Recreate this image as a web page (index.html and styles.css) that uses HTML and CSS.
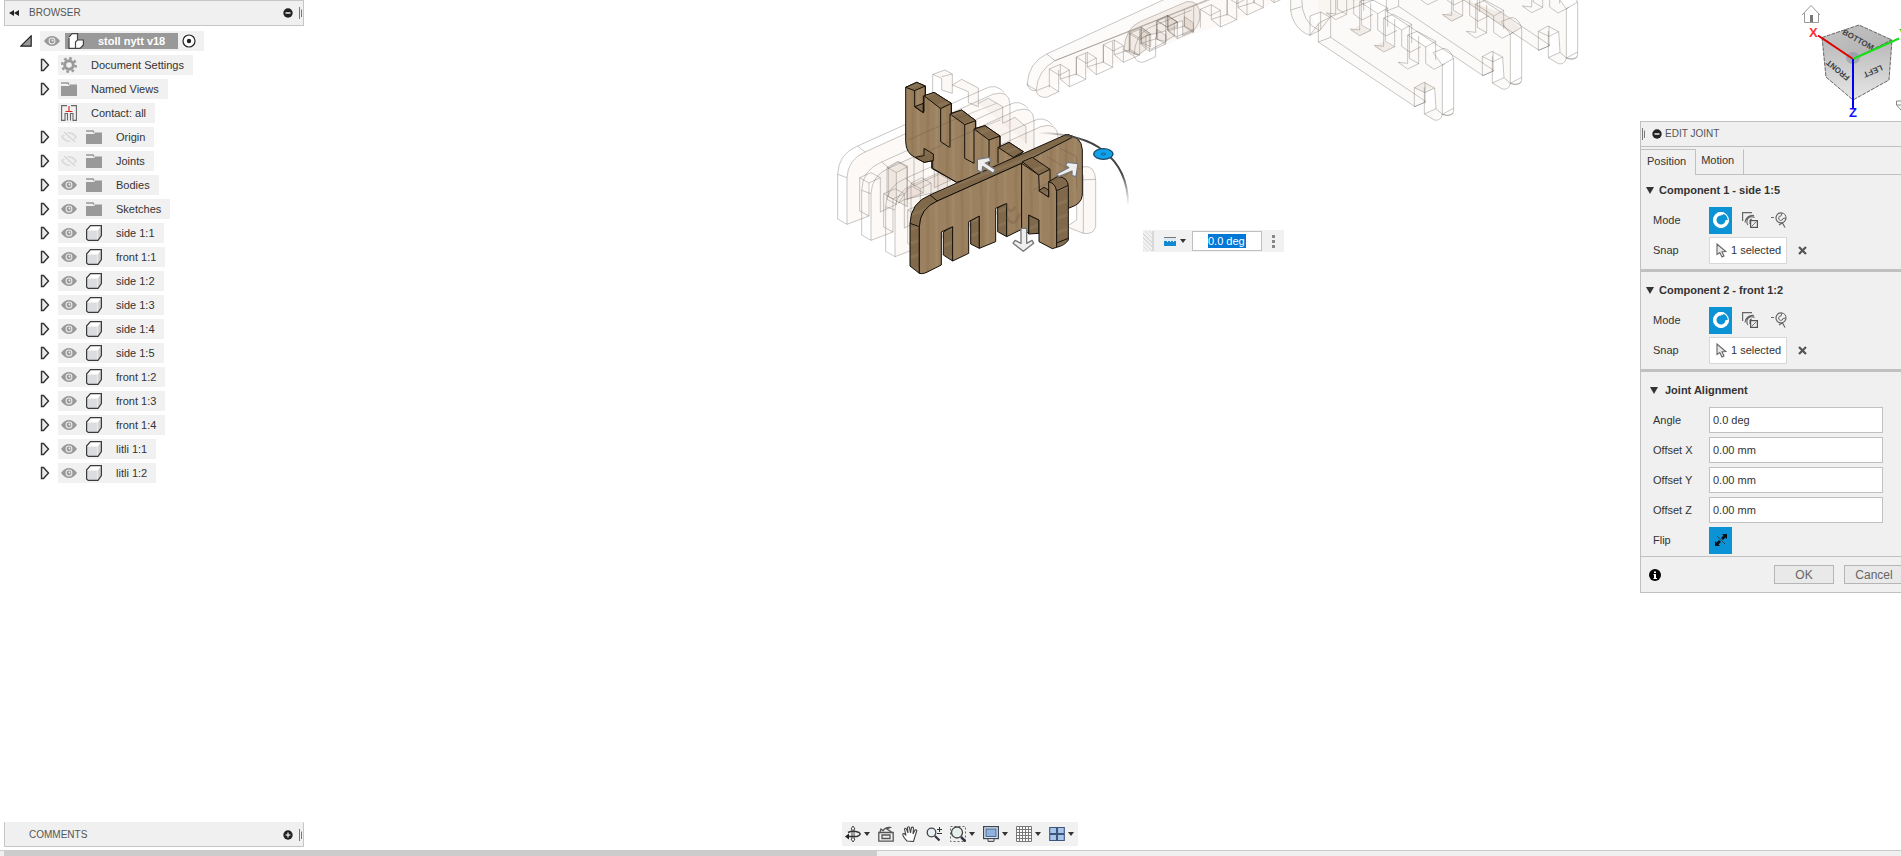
FILE: index.html
```html
<!DOCTYPE html>
<html lang="en">
<head>
<meta charset="utf-8">
<title>stoll nytt v18</title>
<link rel="stylesheet" href="styles.css">
</head>
<body>
<svg class="defs" width="0" height="0" aria-hidden="true">
  <symbol id="tri" viewBox="0 0 10 14"><path d="M1.500 1.500H3.500L8.500 7L3.500 12.500H1.500Z" fill="#e9e9e9" stroke="#333" stroke-width="1.400"/></symbol>
  <symbol id="eye" viewBox="0 0 16 12"><path d="M0 6Q3.500 1 8 1T16 6Q12.500 11 8 11T0 6Z" fill="#999"/><circle cx="8" cy="6" r="3.400" fill="#eee"/><circle cx="8" cy="6" r="2.400" fill="#999"/><circle cx="8.500" cy="5.500" r="1" fill="#eee"/></symbol>
  <symbol id="eyeoff" viewBox="0 0 16 12"><path d="M1 6Q4 2 8 2T15 6Q12 10 8 10T1 6Z" fill="none" stroke="#dcdcdc" stroke-width="2"/><path d="M2 0L14 12" stroke="#f2f2f2" stroke-width="4"/><path d="M3 1L14 11" stroke="#d6d6d6" stroke-width="1.500"/></symbol>
  <symbol id="folder" viewBox="0 0 16 14"><path d="M0 4H8L9 2.500H16V14H0Z" fill="#999"/><path d="M0 1H7L8 2.500" fill="none" stroke="#999" stroke-width="1.500"/></symbol>
  <symbol id="cube" viewBox="0 0 16 16"><path d="M.5 5L4.500 .5H15.500V10.500L12 15.500H2L.5 14Z" fill="#fff"/><path d="M1 5.500H11.500V15H2L1 14Z" fill="#dcdde0"/><path d="M12 5L15 1V10.500L12 15Z" fill="#d2d2d2"/><path d="M.6 5L4.500 .6H15.400V10.500L12 15.400H2.200L.6 14Z" fill="none" stroke="#3a3a3a" stroke-width="1.200"/></symbol>
  <symbol id="gear" viewBox="0 0 16 16"><circle cx="8" cy="8" r="4.300" fill="none" stroke="#999" stroke-width="3"/><circle cx="8" cy="8" r="6.800" fill="none" stroke="#999" stroke-width="2.400" stroke-dasharray="2.670 2.670"/></symbol>
  <symbol id="contact" viewBox="0 0 16 16"><path d="M6 .6H.6V15.400H4V8.500H6.500V15.400M10 .6H15.400V15.400H12V8.500H9.500V15.400" fill="none" stroke="#666" stroke-width="1.100"/><path d="M8 1V6.500M4.500 6.500H11.500" stroke="#d22" stroke-width="1.100"/></symbol>
  <symbol id="minus" viewBox="0 0 10 10"><circle cx="5" cy="5" r="4.700" fill="#222"/><path d="M2.500 5H7.500" stroke="#fff" stroke-width="1.400"/></symbol>
  <symbol id="plus" viewBox="0 0 10 10"><circle cx="5" cy="5" r="4.700" fill="#222"/><path d="M2.500 5H7.500M5 2.500V7.500" stroke="#fff" stroke-width="1.200"/></symbol>
  <symbol id="grip" viewBox="0 0 4 12"><path d="M.5 0V12M2.500 2.500V10" stroke="#777" stroke-width="1"/></symbol>
  <symbol id="caret" viewBox="0 0 6 4"><path d="M0 0H6L3 4Z" fill="#333"/></symbol>
  <symbol id="down" viewBox="0 0 8 7"><path d="M0 0H8L4 7Z" fill="#333"/></symbol>
  <symbol id="simple" viewBox="0 0 16 16"><circle cx="8" cy="8" r="6.200" fill="none" stroke="#fff" stroke-width="3.400" stroke-dasharray="31 8" stroke-dashoffset="0"/><circle cx="8" cy="8" r="7.400" fill="none" stroke="#fff" stroke-width="1.100"/><path d="M8.500 2.500L8 5.500A2.500 2.500 0 1 0 10.500 8.500L13.500 8A5 5 0 0 0 8.500 2.500Z" fill="#0b93d6"/></symbol>
  <symbol id="between" viewBox="0 0 16 16"><path d="M.6 9V.6H10M3 10.500A7.500 7.500 0 0 1 12 3.500M6 13A6 6 0 0 1 5 8A5 5 0 0 1 12.500 5.500M8 12V8.500Q8 7 10 7" fill="none" stroke="#666" stroke-width="1.200"/><rect x="8.600" y="8.600" width="6.800" height="6.800" fill="#eee" stroke="#555" stroke-width="1.200"/><path d="M9.500 14.500L14.500 9.500" stroke="#777"/></symbol>
  <symbol id="two" viewBox="0 0 16 16"><path d="M0 5.500H3M8 13L12 10.500M11.500 11L14 15.500" stroke="#666" stroke-width="1.200"/><path d="M11 1A5 5 0 1 0 15 6" fill="none" stroke="#666" stroke-width="1.200"/><path d="M11 1L10 4A2.200 2.200 0 1 0 12 6.500L15 6A5 5 0 0 0 11 1Z" fill="none" stroke="#666"/></symbol>
  <symbol id="cursor" viewBox="0 0 11 15"><path d="M1 1V11.500L3.800 9.500L6 14L8 13L6 8.800L9.800 8.500Z" fill="#e8e8e8" stroke="#666" stroke-width="1.100"/></symbol>
</svg>

<main class="stage">
  <svg class="scene" role="img" aria-label="Joint preview model">
    <defs>
      <pattern id="wood" width="104" height="400" patternUnits="userSpaceOnUse"><rect width="104" height="400" fill="#9b8160"/><path d="M10 0Q14 200 8 400M69 0Q74 180 67 400" stroke="#957a58" stroke-width="9" fill="none"/><path d="M36 0Q40 200 35 400M88 0Q85 200 90 400" stroke="#a18866" stroke-width="8" fill="none"/></pattern>
      <pattern id="dark" width="60" height="40" patternUnits="userSpaceOnUse" patternTransform="rotate(-20)"><rect width="60" height="40" fill="#80694b"/><path d="M0 10H60" stroke="#8a7254" stroke-width="9"/></pattern>
      <linearGradient id="arc" x1="0" y1="0" x2="1" y2="1"><stop offset="0" stop-color="#555" stop-opacity="0"/><stop offset=".3" stop-color="#444"/><stop offset=".75" stop-color="#444"/><stop offset="1" stop-color="#555" stop-opacity="0"/></linearGradient>
      <g id="frontwire">
        <path d="M298 640V500Q300 445 352 423L735 250Q785 235 787 280V405Q785 430 750 443L722 455V370L689 385V472L640 494V408L608 422V508L560 530V430L527 445V545L478 565V468L446 485V580L398 603V500L364 516V615Z" fill="#c69b7a" fill-opacity=".06"/>
        <path d="M298 640L270 624V490Q272 428 330 405L710 234Q745 215 770 245M298 500L270 490M352 423L330 405M364 516L336 500V600L364 615M398 500L370 485L336 500M446 485L418 469V565L446 580M478 468L450 452L418 469M527 445L499 430V530L527 545M560 430L532 415L499 430M608 422L580 407V492L608 508M689 385L661 370V456"/>
      </g>
      <path id="tooth" d="M148 207L181 193L208 210L178 226ZM181 193V237L208 260L257 238L229 222L181 237M208 210V260M257 160V238M229 172V222M148 207V262"/>
      <g id="sidewire">
        <path d="M115 126L405 320L438 305V262L464 265L468 326L433 342L463 360L487 343L487 195L433 135L115 -70Z" fill="#c69b7a" fill-opacity=".055" stroke="none"/>
        <path d="M115 126L405 320L438 305L152 112ZM115 126V70M152 112V-70M403 263L432 247L464 264L435 278ZM403 263V320M435 247V307L403 320M464 264L468 326L433 342V262M468 326L487 343Q482 364 463 360L433 342M487 195V343Q500 350 520 340M487 343L521 325V180Q515 150 492 145L459 158L487 195L521 175M521 325Q523 345 505 347L487 343"/>
        <path id="sidebox" d="M383 105L412 94L467 124L437 141ZM383 105V190L355 187L383 207L416 191L388 175M388 78V175M416 108V191M437 141V190L462 208L495 191M467 124V180"/>
        <use href="#sidebox" x="-72" y="-51"/><use href="#sidebox" x="-144" y="-100"/><use href="#sidebox" x="-216" y="-148"/>
      </g>
    </defs>

    <svg x="1000" y="0" width="320" height="130" viewBox="0 0 960 390" overflow="visible"><g class="ghost">
      <path d="M82 250Q86 188 140 162L500 -5H640L165 182Q112 212 109 270L82 255ZM140 162L165 182" fill="#c69b7a" fill-opacity=".04"/>
      <path d="M109 270Q112 212 165 182L620 0H840L740 45L148 262L176 275L140 293Q112 292 109 270Z" fill="#c69b7a" fill-opacity=".06" stroke="none"/>
      <path d="M165 182L620 0M82 250Q86 274 109 272M109 272L148 257L176 275L140 292Q112 294 109 272M176 210V275"/>
      <use href="#tooth"/><use href="#tooth" x="81" y="-36"/><use href="#tooth" x="162" y="-73"/><use href="#tooth" x="240" y="-106"/><use href="#tooth" x="324" y="-144"/><use href="#tooth" x="453" y="-179"/><use href="#tooth" x="533" y="-215"/><use href="#tooth" x="614" y="-252"/>
      <path d="M372 150Q375 85 420 65L560 5Q598 0 600 45Q600 72 580 92L548 106V62L523 70V108L498 122V92L470 100L438 106V148L414 165Z" fill="#b58a67" fill-opacity=".13"/>
      <path d="M402 166Q404 105 450 82L575 30M372 150L402 168Q410 190 432 186L467 170V110M388 97L424 82L452 102L420 115ZM470 62L502 46L532 66L500 80ZM388 97V152L414 166M424 82V130L452 148L498 125M470 62V110M502 46V90L530 110L580 88"/>
      <path d="M424 82L452 102V140L424 128ZM502 46L532 66V80L502 90ZM470 88L498 106V125L470 118ZM553 50L580 68V98L553 80Z" fill="#93755c" fill-opacity=".13"/>
    </g></svg>

    <svg x="1280" y="0" width="320" height="130" viewBox="0 0 960 390" overflow="visible"><g class="ghost">
      <path d="M32 -5V30C35 62 55 95 90 106L120 91L152 50L280 0ZM65 -5Q65 70 118 91M32 30L65 20M90 106V48L122 36L150 52L118 68ZM122 36V88" fill="#c69b7a" fill-opacity=".055"/>
      <use href="#sidewire"/><use href="#sidewire" x="204" y="-93"/><use href="#sidewire" x="372" y="-169"/>
      <path d="M555 0L665 38L720 82L700 102L665 78ZM210 92L240 76L272 94L240 108ZM282 140L310 124L344 142L310 156ZM485 48L515 33L548 50L516 65ZM403 263L435 247L464 264L435 278Z" fill="#93755c" fill-opacity=".1" stroke="none"/>
    </g></svg>

    <svg x="820" y="60" width="320" height="230" viewBox="0 0 960 690" overflow="visible">
      <g class="ghost">
        <use href="#frontwire" x="-217" y="-147"/><use href="#frontwire" x="-145" y="-99"/><use href="#frontwire" x="-73" y="-50"/>
        <path d="M338 43L375 30L397 42V100L365 90V55L338 43V120M397 75L425 58L475 84V140L445 128V95L397 75M475 130L505 115L548 140V190M548 190L585 172L618 200V250M365 50L397 42M740 500L770 480V360L790 320Q825 315 827 360V500Q820 525 790 520L740 500M790 345V520M770 360L827 358" fill="#c69b7a" fill-opacity=".07"/>
        <path d="M205 325L235 305L262 318V440L205 410ZM235 430L265 385L385 330L415 350V380L250 420Z" fill="#93755c" fill-opacity=".1"/>
      </g>
      <g class="solid">
        <path d="M257 82L290 67L316 78V110L342 97L394 130V160L425 150L467 182V205L495 197L540 228V262L567 247L610 275L560 320L410 367L338 325V302L312 307L285 292Q258 280 257 245Z" fill="url(#wood)"/>
        <path d="M257 82L290 67L316 78L284 92ZM312 107L342 97L394 130L362 146ZM390 162L425 150L467 182L434 194ZM462 207L495 197L540 228L507 240ZM534 262L567 247L610 275L580 292ZM284 140L310 130V158ZM312 265L340 282V302L312 307L285 292L312 287Z" fill="url(#dark)"/>
        <path d="M284 92V140L310 158V107M316 78V105M312 107V155M362 146V245L388 262M394 130V160M390 162V262M434 194V295L462 310M467 182V205M462 207V310M507 240V320M540 228V262M534 262V310M580 292V300M335 302V325L410 367"/>
        <path d="M605 308L735 225Q785 225 787 270V405Q785 432 750 443L605 500Z" fill="url(#wood)"/>
        <path d="M270 490Q272 428 330 405L735 225Q752 220 755 233L605 310L352 423Q300 445 298 500V640L270 618Z" fill="url(#dark)"/>
        <path d="M370 516L398 500V603L370 585ZM452 482L478 468V565L452 552ZM533 443L560 430V530L533 515Z" fill="url(#dark)"/>
        <path d="M298 640V500Q300 445 352 423L605 310V508L560 530V430L527 445V545L478 565V468L446 485V580L398 603V500L364 516V615L318 638Q305 643 298 640Z" fill="url(#wood)"/>
        <path d="M298 500L270 490M352 423L330 405"/>
        <path d="M626 465L657 480V520L626 522Z" fill="url(#dark)"/>
        <path d="M605 310L656 345L658 392L686 411L686 365Q710 370 710 395V562L697 566L657 545V480L626 465V520L605 505Z" fill="url(#wood)"/>
        <path d="M607 305L637 292L690 328L656 345ZM656 392L672 382L686 390V411ZM686 365L712 350Q745 350 745 382V540Q735 556 710 562V395Q707 370 686 365Z" fill="url(#dark)"/>
        <path d="M690 328V362M710 392L745 376M712 548L745 535"/>
      </g>
      <path d="M557 430Q570 470 585 440M560 470Q580 510 600 460" fill="none" stroke="#6f583c" stroke-opacity=".3" stroke-width="8"/>
      <path d="M720 265L770 290V385M680 290L750 330M640 390L780 325M265 240L400 180L530 130M290 290L430 225L540 180" stroke="#4b3c2b" stroke-opacity=".35" stroke-width="2" fill="none"/>
      <path d="M655 218Q790 222 850 272Q925 330 924 435" fill="none" stroke="url(#arc)" stroke-width="6"/>
      <ellipse cx="850" cy="282" rx="29" ry="16" fill="#12a2ec" stroke="#174765" stroke-width="4"/><ellipse cx="850" cy="282" rx="7" ry="3" fill="none" stroke="#174765" stroke-width="2"/>
      <g class="arrows">
        <path d="M520 340L488 320L486 338L472 330V298L508 292L512 303L496 309L526 329Z"/>
        <path d="M710 342L746 323L736 316L742 307L774 311L768 350L756 347L756 333L716 350Z"/>
        <path d="M603 505H620V550L636 541L641 550L610 574L579 550L585 541L603 550Z"/>
      </g>
    </svg>
  </svg>

  <div class="chrome">
    <div class="left">
      <section class="browser">
        <header class="bar"><svg class="rew" viewBox="0 0 10 6"><path d="M5 0V6L0 3ZM10 0V6L5 3Z" fill="#222"/></svg><h2>BROWSER</h2><button class="dot" aria-label="Collapse browser"><svg><use href="#minus"/></svg></button><svg class="grip"><use href="#grip"/></svg></header>
        <ul class="tree">
          <li class="root"><svg class="open" viewBox="0 0 12 12"><path d="M.8 11.200L11.200 .8V11.200Z" fill="#999" stroke="#222" stroke-width="1.200"/></svg><span class="chip"><svg class="eye"><use href="#eye"/></svg><b class="name"><svg class="asm" viewBox="0 0 16 16"><path d="M1 3L3.500 .6H9V7H15V11.500L12 15.400H1Z" fill="#fff"/><path d="M1 5V15.400H7.500M1 4L4 .6H9.500V7M7.500 15.400V9L9.500 7H15.400V12L12 15.400H7.500" fill="none" stroke="#444" stroke-width="1.200"/></svg>stoll nytt v18</b><svg class="radio" viewBox="0 0 14 14"><circle cx="7" cy="7" r="6" fill="#fff" stroke="#222" stroke-width="1.200"/><circle cx="7" cy="7" r="2.200" fill="#222"/></svg></span></li>
          <li><svg class="tri"><use href="#tri"/></svg><span class="chip"><svg class="ic"><use href="#gear"/></svg>Document Settings</span></li>
          <li><svg class="tri"><use href="#tri"/></svg><span class="chip"><svg class="ic"><use href="#folder"/></svg>Named Views</span></li>
          <li><i class="tri"></i><span class="chip"><svg class="ic"><use href="#contact"/></svg>Contact: all</span></li>
          <li><svg class="tri"><use href="#tri"/></svg><span class="chip"><svg class="eye"><use href="#eyeoff"/></svg><svg class="ic"><use href="#folder"/></svg>Origin</span></li>
          <li><svg class="tri"><use href="#tri"/></svg><span class="chip"><svg class="eye"><use href="#eyeoff"/></svg><svg class="ic"><use href="#folder"/></svg>Joints</span></li>
          <li><svg class="tri"><use href="#tri"/></svg><span class="chip"><svg class="eye"><use href="#eye"/></svg><svg class="ic"><use href="#folder"/></svg>Bodies</span></li>
          <li><svg class="tri"><use href="#tri"/></svg><span class="chip"><svg class="eye"><use href="#eye"/></svg><svg class="ic"><use href="#folder"/></svg>Sketches</span></li>
          <li><svg class="tri"><use href="#tri"/></svg><span class="chip"><svg class="eye"><use href="#eye"/></svg><svg class="ic"><use href="#cube"/></svg>side 1:1</span></li>
          <li><svg class="tri"><use href="#tri"/></svg><span class="chip"><svg class="eye"><use href="#eye"/></svg><svg class="ic"><use href="#cube"/></svg>front 1:1</span></li>
          <li><svg class="tri"><use href="#tri"/></svg><span class="chip"><svg class="eye"><use href="#eye"/></svg><svg class="ic"><use href="#cube"/></svg>side 1:2</span></li>
          <li><svg class="tri"><use href="#tri"/></svg><span class="chip"><svg class="eye"><use href="#eye"/></svg><svg class="ic"><use href="#cube"/></svg>side 1:3</span></li>
          <li><svg class="tri"><use href="#tri"/></svg><span class="chip"><svg class="eye"><use href="#eye"/></svg><svg class="ic"><use href="#cube"/></svg>side 1:4</span></li>
          <li><svg class="tri"><use href="#tri"/></svg><span class="chip"><svg class="eye"><use href="#eye"/></svg><svg class="ic"><use href="#cube"/></svg>side 1:5</span></li>
          <li><svg class="tri"><use href="#tri"/></svg><span class="chip"><svg class="eye"><use href="#eye"/></svg><svg class="ic"><use href="#cube"/></svg>front 1:2</span></li>
          <li><svg class="tri"><use href="#tri"/></svg><span class="chip"><svg class="eye"><use href="#eye"/></svg><svg class="ic"><use href="#cube"/></svg>front 1:3</span></li>
          <li><svg class="tri"><use href="#tri"/></svg><span class="chip"><svg class="eye"><use href="#eye"/></svg><svg class="ic"><use href="#cube"/></svg>front 1:4</span></li>
          <li><svg class="tri"><use href="#tri"/></svg><span class="chip"><svg class="eye"><use href="#eye"/></svg><svg class="ic"><use href="#cube"/></svg>litli 1:1</span></li>
          <li><svg class="tri"><use href="#tri"/></svg><span class="chip"><svg class="eye"><use href="#eye"/></svg><svg class="ic"><use href="#cube"/></svg>litli 1:2</span></li>
        </ul>
      </section>
      <section class="bar comments"><h2>COMMENTS</h2><button class="dot" aria-label="Add comment"><svg><use href="#plus"/></svg></button><svg class="grip"><use href="#grip"/></svg></section>
    </div>

    <nav class="tools" aria-label="Navigation">
      <button class="drop" aria-label="Orbit"><svg class="tool" viewBox="0 0 16 16"><path d="M8 0L10 3H9V13H10L8 16L6 13H7V3H6Z" fill="#fff" stroke="#444"/><path d="M3 6.500Q8 4 14 6.500Q17 8.500 12 10.500H3" fill="none" stroke="#333" stroke-width="1.500"/><path d="M4 7.500V13.500L0 10.500Z" fill="#222"/></svg><svg class="caret"><use href="#caret"/></svg></button>
      <button aria-label="Look at"><svg class="tool" viewBox="0 0 16 16"><path d="M.8 6.500H15.200V15.200H.8ZM4 9H12V12.500H4ZM2 6L3 3L5 4.500Q8 .8 12 1.500L9 3L13.500 6" fill="none" stroke="#555" stroke-width="1.300"/></svg></button>
      <button aria-label="Pan"><svg class="tool" viewBox="0 0 16 16"><path d="M5 15Q1 11 .7 8Q2 6.500 4 9.500L2.500 3Q3.500 1.500 4.500 3L6 7L5.500 1.500Q6.500 0 7.500 1.500L8.500 7L9.500 1.500Q10.500 .5 11.500 2L11 8L13 4Q15 3.500 14.700 5L12.500 12L11.500 15.500Z" fill="#fff" stroke="#444" stroke-width="1.100"/></svg></button>
      <button aria-label="Zoom"><svg class="tool" viewBox="0 0 16 16"><circle cx="5.500" cy="6.500" r="4.300" fill="#e8eef3" stroke="#444" stroke-width="1.300"/><path d="M9 10L13.500 14.500" stroke="#334" stroke-width="2.200"/><path d="M11 3.500H16M13.500 1V6M11 7.500H16" stroke="#333"/></svg></button>
      <button class="drop" aria-label="Zoom window"><svg class="tool" viewBox="0 0 16 16"><path d="M.5 .5H15.500V15.500H.5Z" fill="none" stroke="#666" stroke-dasharray="2 2"/><circle cx="7" cy="6.500" r="5.500" fill="#e5efed" stroke="#444" stroke-width="1.300"/><path d="M11 11L15.500 15.500" stroke="#334" stroke-width="2.500"/></svg><svg class="caret"><use href="#caret"/></svg></button>
      <button class="drop" aria-label="Display settings"><svg class="tool" viewBox="0 0 16 16"><rect x=".6" y=".6" width="14.800" height="12" fill="#dfe6ee" stroke="#3c4654" stroke-width="1.200"/><rect x="3" y="3" width="10" height="7.500" fill="#8fb2de" stroke="#4a6694"/><path d="M5 13V15.400H11V13" fill="#ddd" stroke="#3c4654"/></svg><svg class="caret"><use href="#caret"/></svg></button>
      <button class="drop" aria-label="Grid and snaps"><svg class="tool" viewBox="0 0 16 16"><path d="M.5 .5H15.500V15.500H.5ZM3.500 0V16M6.500 0V16M9.500 0V16M12.500 0V16M0 3.500H16M0 6.500H16M0 9.500H16M0 12.500H16" fill="#fff" stroke="#777"/></svg><svg class="caret"><use href="#caret"/></svg></button>
      <button class="drop" aria-label="Viewports"><svg class="tool" viewBox="0 0 16 16"><path d="M.7 1.500H7.500V7.500H.7ZM8.500 1.500H15.300V7.500H8.500ZM.7 8.500H7.500V14.500H.7ZM8.500 8.500H15.300V14.500H8.500Z" fill="#a9c6ea" stroke="#3d567d" stroke-width="1.100"/></svg><svg class="caret"><use href="#caret"/></svg></button>
    </nav>

    <div class="right">
      <svg class="viewcube" viewBox="0 0 101 121" role="img" aria-label="View cube">
        <defs><linearGradient id="f1" x1="0" y1="0" x2="1" y2="1"><stop offset="0" stop-color="#c4c4c4"/><stop offset="1" stop-color="#b0b0b0"/></linearGradient><linearGradient id="f2" x1="0" y1="0" x2="0" y2="1"><stop offset="0" stop-color="#b8b8b8"/><stop offset="1" stop-color="#e6e6e6"/></linearGradient></defs>
        <path d="M2 15L11 5.500L20 15M4.500 13V22.500H18.500V13" fill="#fff" stroke="#999"/><rect x="10" y="15" width="3" height="7" fill="#777"/>
        <g stroke="#666" stroke-dasharray="4 1"><path d="M22 37.500L59 25L92 40L53 59Z" fill="url(#f1)"/><path d="M22 37.500L53 59V100L26 77Z" fill="url(#f2)"/><path d="M53 59L92 40L89 80L53 100Z" fill="url(#f2)"/></g>
        <ellipse cx="53" cy="58" rx="7" ry="6" fill="#8d93a5" opacity=".6"/>
        <g class="face"><text transform="translate(58 40) rotate(29)">BOTTOM</text><text transform="translate(73 71) rotate(156)">LEFT</text><text transform="translate(38 70) rotate(219)">FRONT</text></g>
        <path d="M18 35.500L53 59" stroke="#e00000" stroke-width="2"/><path d="M53 59L99 38.500" stroke="#16e016" stroke-width="2"/><path d="M53 59V108" stroke="#0000f0" stroke-width="2"/>
        <g class="axis"><text x="9" y="37" fill="#f33">X</text><text x="99" y="38" fill="#2c2">Y</text><text x="49" y="117" fill="#11f">Z</text></g>
        <path d="M101 101H96.500V105L101 110M97 105H101" fill="none" stroke="#888"/>
      </svg>
      <form class="dialog">
        <header class="bar2"><svg class="grip"><use href="#grip"/></svg><button type="button" class="dot" aria-label="Collapse"><svg><use href="#minus"/></svg></button><h2>EDIT JOINT</h2></header>
        <div class="tabs"><button type="button" class="tab on">Position</button><button type="button" class="tab">Motion</button></div>
        <fieldset>
          <h3><svg class="down"><use href="#down"/></svg>Component 1 - side 1:5</h3>
          <div class="row"><span class="lab">Mode</span><button type="button" class="mode on" aria-label="Simple"><svg><use href="#simple"/></svg></button><button type="button" class="mode" aria-label="Between two faces"><svg><use href="#between"/></svg></button><button type="button" class="mode" aria-label="Two edge intersection"><svg><use href="#two"/></svg></button></div>
          <div class="row"><span class="lab">Snap</span><button type="button" class="snap"><svg><use href="#cursor"/></svg>1 selected</button><button type="button" class="x" aria-label="Clear selection"><svg viewBox="0 0 9 9"><path d="M1 1L8 8M8 1L1 8" stroke="#555" stroke-width="2.200"/></svg></button></div>
        </fieldset>
        <fieldset>
          <h3><svg class="down"><use href="#down"/></svg>Component 2 - front 1:2</h3>
          <div class="row"><span class="lab">Mode</span><button type="button" class="mode on" aria-label="Simple"><svg><use href="#simple"/></svg></button><button type="button" class="mode" aria-label="Between two faces"><svg><use href="#between"/></svg></button><button type="button" class="mode" aria-label="Two edge intersection"><svg><use href="#two"/></svg></button></div>
          <div class="row"><span class="lab">Snap</span><button type="button" class="snap"><svg><use href="#cursor"/></svg>1 selected</button><button type="button" class="x" aria-label="Clear selection"><svg viewBox="0 0 9 9"><path d="M1 1L8 8M8 1L1 8" stroke="#555" stroke-width="2.200"/></svg></button></div>
        </fieldset>
        <fieldset>
          <h3 class="indent"><svg class="down"><use href="#down"/></svg>Joint Alignment</h3>
          <div class="row"><label class="lab" for="ang">Angle</label><input id="ang" value="0.0 deg"></div>
          <div class="row"><label class="lab" for="ox">Offset X</label><input id="ox" value="0.00 mm"></div>
          <div class="row"><label class="lab" for="oy">Offset Y</label><input id="oy" value="0.00 mm"></div>
          <div class="row"><label class="lab" for="oz">Offset Z</label><input id="oz" value="0.00 mm"></div>
          <div class="row"><span class="lab">Flip</span><button type="button" class="mode on" aria-label="Flip"><svg viewBox="0 0 16 16"><path d="M2 9V14H7L5.500 12.500L8 10L6 8L3.500 10.500ZM14 2V7L12.500 5.500L10 8L8 6L10.500 3.500L9 2Z" fill="#081018"/><path d="M4 4L12 12" stroke="#26415a"/></svg></button></div>
        </fieldset>
        <footer><svg class="info" viewBox="0 0 12 12"><circle cx="6" cy="6" r="6" fill="#000"/><path d="M5 2.500H7V4H5ZM4.500 5H7V9H8V10H4.500V9H5V6H4.500Z" fill="#fff"/></svg><button type="button" class="btn">OK</button><button type="button" class="btn">Cancel</button></footer>
      </form>
    </div>
  </div>

  <div class="float">
    <i class="dots"></i>
    <button aria-label="Measure type"><svg class="ruler" viewBox="0 0 12 9"><rect width="12" height="9" fill="#1488d0"/><path d="M0 0H12V4H10V5H9V4H7V5H6V4H4V5H3V4H0Z" fill="#dcecf5"/><path d="M0 .5H12" stroke="#777"/></svg><svg class="caret"><use href="#caret"/></svg></button>
    <span class="value"><input aria-label="Angle value" value="0.0 deg"></span>
    <button class="more" aria-label="More"><svg viewBox="0 0 3 13"><path d="M0 0H3V3H0ZM0 5H3V8H0ZM0 10H3V13H0Z" fill="#888"/></svg></button>
  </div>
</main>
<div class="scroll"><div class="thumb"></div></div>
</body>
</html>
```
FILE: styles.css
```css
* { box-sizing: border-box; }
html, body { height: 100%; margin: 0; }
body {
  display: flex;
  flex-direction: column;
  overflow: hidden;
  background: #fff;
  color: #333;
  font: 11px/14px "Liberation Sans", Arial, sans-serif;
}
h2, h3 { margin: 0; font-size: 11px; }
h2 { font-size: 10px; font-weight: 400; color: #555; }
button { border: 0; padding: 0; background: none; color: inherit; font: inherit; }
svg { display: block; flex: none; }
.defs { position: absolute; }
.stage { position: relative; flex: 1; min-height: 0; overflow: hidden; }
.scene { position: absolute; left: 0; top: 0; width: 100%; height: 100%; }
.ghost { fill: none; stroke: #5c5652; stroke-opacity: .5; stroke-width: 2; }
.solid { fill: none; stroke: #15100a; stroke-width: 3; stroke-linejoin: round; }
.arrows { fill: #eee; stroke: #777; stroke-width: 4; stroke-linejoin: round; }

.chrome { position: relative; display: grid; grid-template-columns: 304px 1fr 285px; height: 100%; }
.left { display: flex; flex-direction: column; justify-content: space-between; padding: 0 0 3px 4px; }
.bar {
  display: flex;
  align-items: center;
  height: 26px;
  padding-left: 4px;
  border: 1px solid #c6c6c6;
  background: #f0f0f0;
}
.bar h2 { flex: 1; padding-left: 10px; }
.rew { width: 10px; height: 6px; }
.comments { border-top-color: #f0f0f0; padding-left: 14px; height: 25px; }
.dot svg { width: 10px; height: 10px; }
.grip { width: 4px; height: 12px; }
.bar .grip { margin-left: 6px; }

.tree { margin: 3px 0 0; padding: 0; list-style: none; }
.tree li { display: flex; align-items: center; gap: 8px; height: 24px; padding-left: 36px; }
.tree .root { padding-left: 16px; }
.open { width: 12px; height: 12px; }
.tri { width: 10px; height: 14px; }
.chip { display: flex; align-items: center; height: 20px; padding: 0 9px 0 3px; background: #f1f1f1; }
.eye { width: 16px; height: 12px; margin-right: 9px; }
.ic { width: 16px; height: 16px; margin-right: 14px; }
.root .chip { padding: 0 8px 0 4px; }
.root .eye { margin-right: 5px; }
.name { display: flex; align-items: center; height: 16px; padding-right: 13px; background: #999; color: #fff; }
.asm { width: 16px; height: 16px; margin: 0 14px 0 3px; }
.radio { width: 14px; height: 14px; margin-left: 4px; }

.tools {
  display: flex;
  align-items: center;
  align-self: end;
  justify-self: center;
  gap: 8px;
  height: 24px;
  margin-bottom: 4px;
  padding: 0 4px 0 3px;
  background: #f1f1f1;
}
.tools button { display: flex; align-items: center; gap: 3px; }
.tool { width: 16px; height: 16px; }
.caret { width: 6px; height: 4px; }

.right { display: flex; flex-direction: column; align-items: flex-end; overflow: hidden; }
.viewcube { width: 101px; height: 121px; }
.face { fill: #3d4248; font-size: 8px; font-weight: 700; text-anchor: middle; dominant-baseline: central; }
.axis { font-size: 13px; font-weight: 700; }
.dialog { width: 261px; border: 1px solid #c0c0c0; border-right: 0; background: #f0f0f0; overflow: hidden; }
.bar2 { display: flex; align-items: center; gap: 6px; height: 25px; padding-left: 1px; border-bottom: 1px solid #c0c0c0; }
.bar2 h2 { margin-left: -3px; }
.tabs { display: flex; height: 28px; padding-top: 2px; }
.tab { padding: 0 6px 4px; border: 1px solid #c0c0c0; border-width: 1px 1px 0 0; }
.tab.on { padding: 0 9px 3px 6px; }
.tab:not(.on) { padding: 0 9px 4px 5px; border-top-color: #f0f0f0; border-bottom: 1px solid #c0c0c0; }
.tabs::after { content: ""; flex: 1; border-bottom: 1px solid #c0c0c0; }
fieldset { margin: 0; padding: 0 0 4px; border: 0; border-bottom: 3px solid #c0c0c0; }
fieldset + fieldset { padding-top: 3px; }
fieldset:last-of-type { border-bottom: 1px solid #c0c0c0; padding-bottom: 1px; }
h3 { display: flex; align-items: center; gap: 5px; height: 30px; padding-left: 5px; }
h3.indent { padding-left: 9px; gap: 7px; }
.down { width: 8px; height: 7px; }
.row { display: flex; align-items: center; height: 30px; padding-left: 12px; }
.lab { width: 56px; }
.row input { width: 174px; height: 26px; padding: 0 3px; border: 1px solid #c0c0c0; background: #fff; color: #333; font: inherit; }
.mode { display: grid; place-items: center; width: 23px; height: 27px; margin-right: 6px; }
.mode.on { background: #0b93d6; }
.mode svg { width: 16px; height: 16px; }
.snap { display: flex; align-items: center; gap: 4px; width: 78px; height: 27px; padding-left: 6px; border: 1px solid #d8d8d8; background: #fff; }
.snap svg { width: 11px; height: 15px; }
.x { margin-left: 11px; }
.x svg { width: 9px; height: 9px; }
footer { display: flex; align-items: center; gap: 10px; height: 35px; padding-left: 8px; }
.info { width: 12px; height: 12px; margin-right: 103px; }
.btn { flex: none; width: 60px; height: 19px; border: 1px solid #b5b5b5; background: #e9e9e9; color: #666; font-size: 12px; }

.float { position: absolute; left: 1143px; top: 230px; display: flex; align-items: center; height: 22px; background: #f1f1f1; }
.dots { width: 11px; height: 20px; border-right: 2px solid #d8d8d8; background: repeating-linear-gradient(45deg, #dcdcdc 0 1px, #f1f1f1 1px 3px); }
.float button { display: flex; align-items: center; gap: 4px; margin: 0 6px 0 10px; }
.ruler { width: 12px; height: 9px; }
.value { display: flex; justify-content: center; align-items: center; width: 70px; height: 20px; border: 1px solid #c0c0c0; background: #fff; }
.value input { width: 38px; height: 14px; padding: 0; border: 0; background: #0078d7; color: #fff; font: inherit; }
.float .more { margin: 0 9px 0 10px; }
.more svg { width: 3px; height: 13px; }

.scroll { flex: none; height: 6px; padding-left: 4px; border-top: 1px solid #ccc; background: #f0f0f0; }
.thumb { width: 46%; height: 5px; background: #ccc; }
```
